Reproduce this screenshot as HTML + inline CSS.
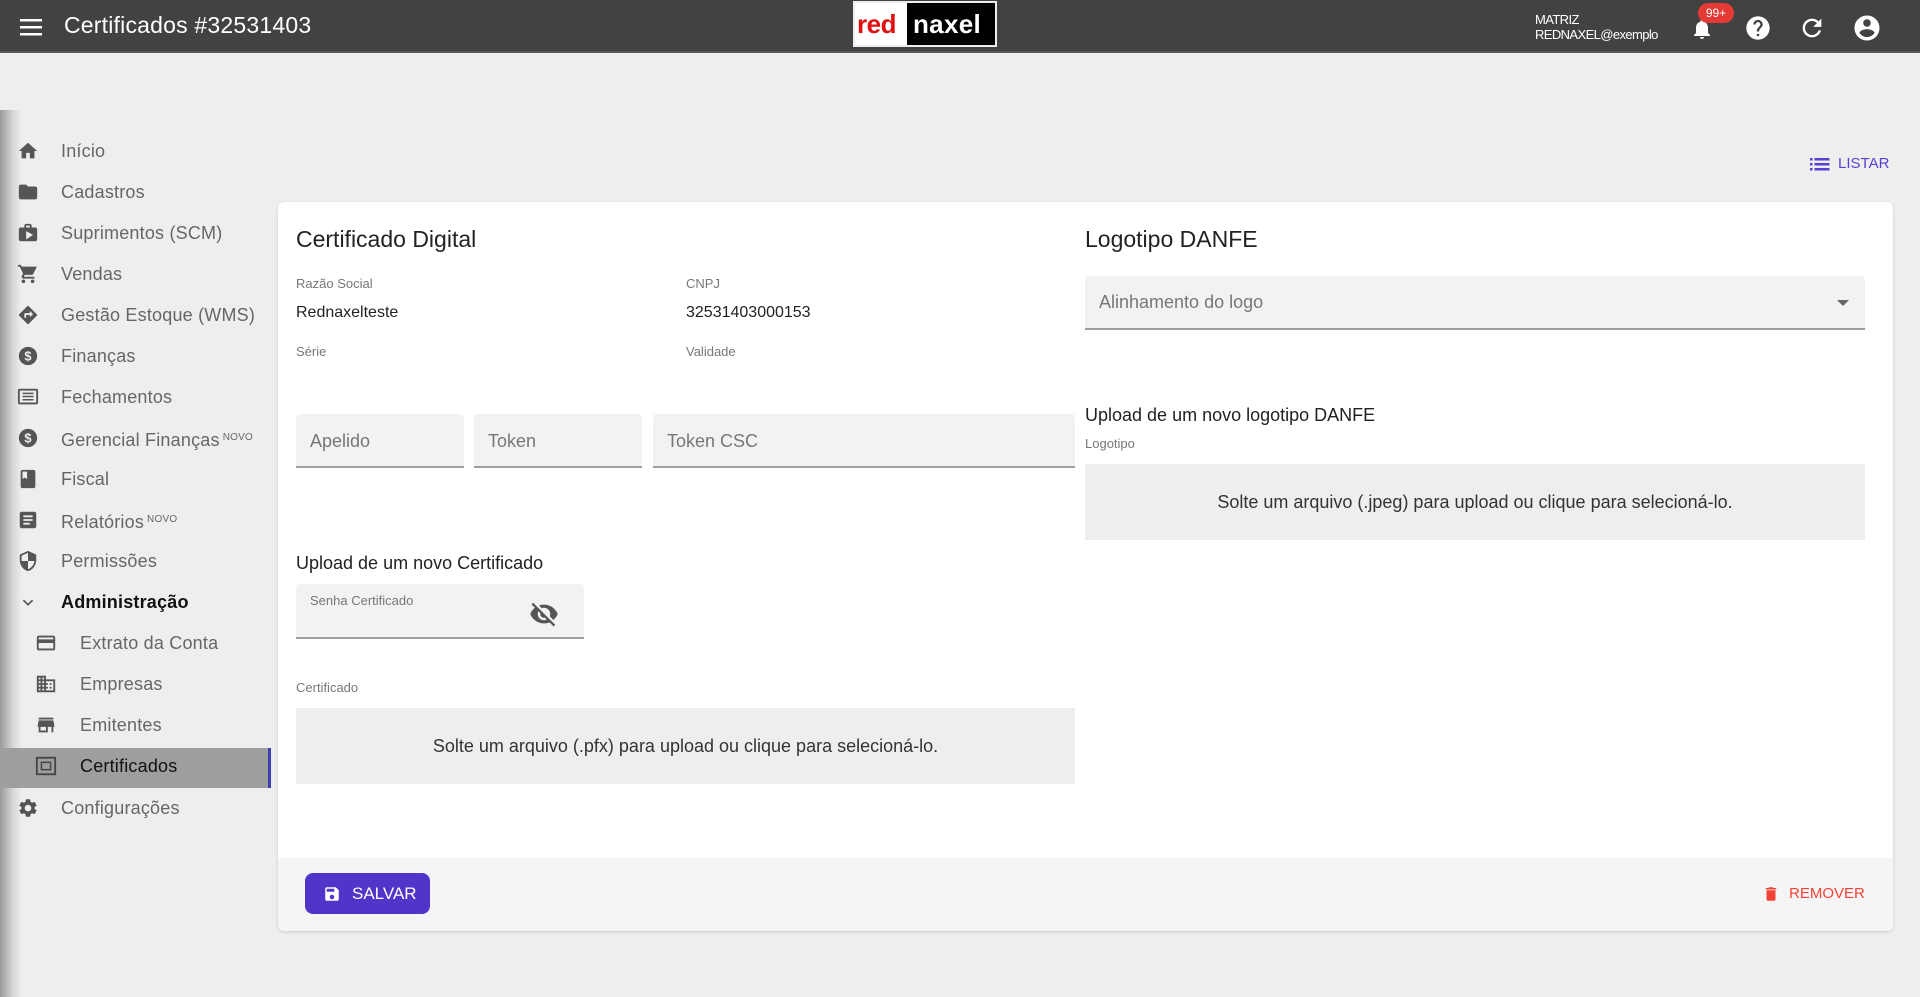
<!DOCTYPE html>
<html><head><meta charset="utf-8"><style>
*{box-sizing:border-box;margin:0;padding:0}
body{width:1920px;height:997px;background:#eeeeee;font-family:"Liberation Sans",Arial,sans-serif;position:relative;overflow:hidden;color:#212121}
.top{position:absolute;left:0;top:0;width:1920px;height:53px;background:#424242;border-bottom:2px solid #5a5a5a}
.abs{position:absolute}
.side{position:absolute;left:0;top:53px;width:272px;height:944px;background:#eeeeee}
.shadow{position:absolute;left:0;top:110px;width:22px;height:887px;background:linear-gradient(90deg,#9a9a9a,#d8d8d8 60%,rgba(238,238,238,0))}
.it{position:absolute;left:0;width:272px;height:40px;font-size:18px;color:#666;line-height:40px;letter-spacing:.2px}
.it .ic{position:absolute;left:17px;top:9px;width:22px;height:22px}
.it span{position:absolute;left:61px}
.it.sub .ic{left:35px}
.it.sub span{left:80px}
sup{font-size:10px;vertical-align:6px;margin-left:3px}
.card{position:absolute;left:278px;top:202px;width:1615px;height:729px;background:#fff;border-radius:6px;box-shadow:0 1px 3px rgba(0,0,0,.15);overflow:hidden}
.foot{position:absolute;left:0;bottom:0;width:100%;height:73px;background:#f5f5f5}
.lbl{position:absolute;font-size:13px;color:#777}
.val{position:absolute;font-size:16px;color:#222}
.h{position:absolute;font-size:23px;color:#222}
.inp{position:absolute;background:#f2f2f2;border-bottom:2px solid #9e9e9e;border-radius:4px 4px 0 0;font-size:18px;color:#777}
.drop{position:absolute;background:#eeeeee;font-size:18px;color:#333;text-align:center}
</style></head><body>
<div class="top">
  <svg class="abs" style="left:20px;top:18px" width="22" height="18" viewBox="0 0 22 18"><rect y="1" width="22" height="2.5" fill="#fff"/><rect y="8" width="22" height="2.5" fill="#fff"/><rect y="15" width="22" height="2.5" fill="#fff"/></svg>
  <div class="abs" style="left:64px;top:12px;font-size:23px;color:#fff;letter-spacing:.2px">Certificados #32531403</div>
  <div class="abs" style="left:853px;top:1px;width:144px;height:46px;background:#000;border:2px solid #eee"></div>
  <div class="abs" style="left:855px;top:3px;width:52px;height:42px;background:#fff"></div>
  <div class="abs" style="left:857px;top:9px;font-size:26px;font-weight:bold;color:#e01010;letter-spacing:-.5px">red</div>
  <div class="abs" style="left:913px;top:9px;font-size:26px;font-weight:bold;color:#fff;letter-spacing:.3px">naxel</div>
  <div class="abs" style="left:1535px;top:12px;font-size:13px;color:#fff;line-height:15px;letter-spacing:-.6px">MATRIZ<br>REDNAXEL@exemplo</div>
  <svg class="abs" style="left:1690px;top:16px" width="24" height="26" viewBox="0 0 24 24"><path d="M12 22c1.1 0 2-.9 2-2h-4c0 1.1.9 2 2 2zm6-6v-5c0-3.070-1.640-5.640-4.5-6.320V4c0-.83-.67-1.5-1.5-1.5s-1.5.67-1.5 1.5v.68C7.63 5.36 6 7.92 6 11v5l-2 2v1h16v-1l-2-2z" fill="#fff"/></svg>
  <div class="abs" style="left:1698px;top:3px;width:36px;height:20px;border-radius:10px;background:#e53935;color:#fff;font-size:12px;line-height:20px;text-align:center">99+</div>
  <svg class="abs" style="left:1744px;top:14px" width="28" height="28" viewBox="0 0 24 24"><path d="M12 2C6.48 2 2 6.48 2 12s4.48 10 10 10 10-4.48 10-10S17.52 2 12 2zm1 17h-2v-2h2v2zm2.07-7.75l-.9.92C13.45 12.9 13 13.5 13 15h-2v-.5c0-1.1.45-2.1 1.17-2.83l1.24-1.26c.37-.36.59-.86.59-1.41 0-1.1-.9-2-2-2s-2 .9-2 2H8c0-2.21 1.79-4 4-4s4 1.790 4 4c0 .88-.36 1.68-.93 2.25z" fill="#fff"/></svg>
  <svg class="abs" style="left:1798px;top:14px" width="28" height="28" viewBox="0 0 24 24"><path d="M17.65 6.35C16.2 4.9 14.21 4 12 4c-4.42 0-7.99 3.58-7.99 8s3.57 8 7.99 8c3.73 0 6.84-2.55 7.73-6h-2.080c-.82 2.33-3.040 4-5.650 4-3.310 0-6-2.690-6-6s2.690-6 6-6c1.660 0 3.140.69 4.220 1.780L13 11h7V4l-2.350 2.350z" fill="#fff"/></svg>
  <svg class="abs" style="left:1852px;top:13px" width="30" height="30" viewBox="0 0 24 24"><path d="M12 2C6.48 2 2 6.48 2 12s4.48 10 10 10 10-4.48 10-10S17.52 2 12 2zm0 3c1.66 0 3 1.34 3 3s-1.34 3-3 3-3-1.34-3-3 1.34-3 3-3zm0 14.2c-2.5 0-4.71-1.28-6-3.22.03-1.99 4-3.08 6-3.08 1.99 0 5.97 1.09 6 3.08-1.29 1.94-3.5 3.22-6 3.22z" fill="#fff"/></svg>
</div>

<div class="side"></div>
<div class="shadow"></div>
<div class="abs" style="left:0;top:748px;width:269px;height:40px;background:#9e9e9e"></div>
<div class="abs" style="left:268px;top:748px;width:3px;height:40px;background:#3f3fb0"></div>

<div class="it" style="top:131px"><svg class="ic" viewBox="0 0 24 24"><path d="M10 20v-6h4v6h5v-8h3L12 3 2 12h3v8z" fill="#555"/></svg><span>Início</span></div>
<div class="it" style="top:172px"><svg class="ic" viewBox="0 0 24 24"><path d="M10 4H4c-1.1 0-2 .9-2 2v12c0 1.1.9 2 2 2h16c1.1 0 2-.9 2-2V8c0-1.1-.9-2-2-2h-8l-2-2z" fill="#555"/></svg><span>Cadastros</span></div>
<div class="it" style="top:213px"><svg class="ic" viewBox="0 0 24 24"><path d="M20 6h-4V4c0-1.1-.9-2-2-2h-4c-1.1 0-2 .9-2 2v2H4c-1.1 0-2 .9-2 2v11c0 1.1.9 2 2 2h16c1.1 0 2-.9 2-2V8c0-1.1-.9-2-2-2zM10 4h4v2h-4V4zm0 15V10l7.5 4z" fill="#555"/></svg><span>Suprimentos (SCM)</span></div>
<div class="it" style="top:254px"><svg class="ic" viewBox="0 0 24 24"><path d="M7 18c-1.1 0-2 .9-2 2s.9 2 2 2 2-.9 2-2-.9-2-2-2zM1 2v2h2l3.6 7.59-1.35 2.45C4.52 15.37 5.48 17 7 17h12v-2H7.42l1.1-2h7.45c.75 0 1.41-.41 1.75-1.03L21.7 4H5.21l-.94-2H1zm16 16c-1.1 0-2 .9-2 2s.9 2 2 2 2-.9 2-2-.9-2-2-2z" fill="#555"/></svg><span>Vendas</span></div>
<div class="it" style="top:295px"><svg class="ic" viewBox="0 0 24 24"><path d="M21.7 11.3l-9-9a1 1 0 00-1.4 0l-9 9a1 1 0 000 1.4l9 9a1 1 0 001.4 0l9-9a1 1 0 000-1.4zM14 14.5V12h-4v3H8v-4c0-.55.45-1 1-1h5V7.5l3.5 3.5-3.5 3.5z" fill="#555"/></svg><span>Gestão Estoque (WMS)</span></div>
<div class="it" style="top:336px"><svg class="ic" viewBox="0 0 24 24"><circle cx="12" cy="12" r="10" fill="#555"/><text x="12" y="17" font-size="14" font-weight="bold" text-anchor="middle" fill="#eee" font-family="Liberation Sans">$</text></svg><span>Finanças</span></div>
<div class="it" style="top:377px"><svg class="ic" viewBox="0 0 24 24"><rect x="2" y="4" width="20" height="15" rx="1" fill="none" stroke="#555" stroke-width="2"/><path d="M6 8h12M6 11.5h12M6 15h12" stroke="#555" stroke-width="1.6"/></svg><span>Fechamentos</span></div>
<div class="it" style="top:418px"><svg class="ic" viewBox="0 0 24 24"><circle cx="12" cy="12" r="10" fill="#555"/><text x="12" y="17" font-size="14" font-weight="bold" text-anchor="middle" fill="#eee" font-family="Liberation Sans">$</text></svg><span>Gerencial Finanças<sup>NOVO</sup></span></div>
<div class="it" style="top:459px"><svg class="ic" viewBox="0 0 24 24"><path d="M18 2H6c-1.1 0-2 .9-2 2v16c0 1.1.9 2 2 2h12c1.1 0 2-.9 2-2V4c0-1.1-.9-2-2-2zM6 4h5v8l-2.5-1.5L6 12V4z" fill="#555"/></svg><span>Fiscal</span></div>
<div class="it" style="top:500px"><svg class="ic" viewBox="0 0 24 24"><path d="M19 3H5c-1.1 0-2 .9-2 2v14c0 1.1.9 2 2 2h14c1.1 0 2-.9 2-2V5c0-1.1-.9-2-2-2zm-5 14H7v-2h7v2zm3-4H7v-2h10v2zm0-4H7V7h10v2z" fill="#555"/></svg><span>Relatórios<sup>NOVO</sup></span></div>
<div class="it" style="top:541px"><svg class="ic" viewBox="0 0 24 24"><path d="M12 1L3 5v6c0 5.55 3.84 10.74 9 12 5.16-1.26 9-6.45 9-12V5l-9-4zm0 10.99h7c-.53 4.12-3.28 7.79-7 8.94V12H5V6.3l7-3.11v8.8z" fill="#555"/></svg><span>Permissões</span></div>
<div class="it" style="top:582px;color:#111;font-weight:bold"><svg class="ic" viewBox="0 0 24 24"><path d="M7 10l5 5 5-5" fill="none" stroke="#555" stroke-width="1.8"/></svg><span>Administração</span></div>
<div class="it sub" style="top:623px"><svg class="ic" viewBox="0 0 24 24"><path d="M20 4H4c-1.11 0-2 .89-2 2v12c0 1.11.89 2 2 2h16c1.11 0 2-.89 2-2V6c0-1.11-.89-2-2-2zm0 14H4v-6h16v6zm0-10H4V6h16v2z" fill="#555"/></svg><span>Extrato da Conta</span></div>
<div class="it sub" style="top:664px"><svg class="ic" viewBox="0 0 24 24"><path d="M12 7V3H2v18h20V7H12zM6 19H4v-2h2v2zm0-4H4v-2h2v2zm0-4H4V9h2v2zm0-4H4V5h2v2zm4 12H8v-2h2v2zm0-4H8v-2h2v2zm0-4H8V9h2v2zm0-4H8V5h2v2zm10 12h-8v-2h2v-2h-2v-2h2v-2h-2V9h8v10zm-2-8h-2v2h2v-2zm0 4h-2v2h2v-2z" fill="#555"/></svg><span>Empresas</span></div>
<div class="it sub" style="top:705px"><svg class="ic" viewBox="0 0 24 24"><path d="M20 4H4v2h16V4zm1 10v-2l-1-5H4l-1 5v2h1v6h10v-6h4v6h2v-6h1zm-9 4H6v-4h6v4z" fill="#555"/></svg><span>Emitentes</span></div>
<div class="it sub" style="top:746px;color:#111"><svg class="ic" viewBox="0 0 24 24"><rect x="2" y="3" width="20" height="18" fill="none" stroke="#444" stroke-width="2"/><rect x="7" y="8" width="10" height="8" fill="none" stroke="#444" stroke-width="1.6"/></svg><span>Certificados</span></div>
<div class="it" style="top:788px"><svg class="ic" viewBox="0 0 24 24"><path d="M19.14 12.94c.04-.3.06-.61.06-.94 0-.32-.02-.64-.07-.94l2.030-1.580a.49.49 0 00.12-.61l-1.920-3.320a.488.488 0 00-.59-.22l-2.390.96c-.5-.38-1.030-.7-1.620-.94l-.36-2.540a.484.484 0 00-.48-.41h-3.840c-.24 0-.43.17-.47.41l-.36 2.540c-.59.24-1.130.57-1.620.94l-2.390-.96c-.22-.08-.47 0-.59.22L2.74 8.87c-.12.21-.08.47.12.61l2.030 1.580c-.05.3-.09.63-.09.94s.02.64.07.94l-2.030 1.580a.49.49 0 00-.12.61l1.920 3.320c.12.22.37.29.59.22l2.390-.96c.5.38 1.030.7 1.620.94l.36 2.540c.05.24.24.41.48.41h3.840c.24 0 .44-.17.47-.41l.36-2.540c.59-.24 1.130-.56 1.620-.94l2.390.96c.22.08.47 0 .59-.22l1.920-3.320c.12-.22.07-.47-.12-.61l-2.010-1.580zM12 15.6c-1.98 0-3.6-1.62-3.6-3.6s1.62-3.6 3.6-3.6 3.6 1.62 3.6 3.6-1.62 3.6-3.6 3.6z" fill="#555"/></svg><span>Configurações</span></div>

<svg class="abs" style="left:1810px;top:155px" width="20" height="18" viewBox="0 0 20 18"><g fill="#5b3fd3"><rect x="0" y="3" width="2.5" height="2.5"/><rect x="0" y="8" width="2.5" height="2.5"/><rect x="0" y="13" width="2.5" height="2.5"/><rect x="4.5" y="3" width="15" height="2.5"/><rect x="4.5" y="8" width="15" height="2.5"/><rect x="4.5" y="13" width="15" height="2.5"/></g></svg>
<div class="abs" style="left:1838px;top:155px;font-size:15px;color:#5b3fd3">LISTAR</div>

<div class="card">
  <div class="h" style="left:18px;top:24px">Certificado Digital</div>
  <div class="lbl" style="left:18px;top:74px">Razão Social</div>
  <div class="val" style="left:18px;top:102px">Rednaxelteste</div>
  <div class="lbl" style="left:408px;top:74px">CNPJ</div>
  <div class="val" style="left:408px;top:102px">32531403000153</div>
  <div class="lbl" style="left:18px;top:142px">Série</div>
  <div class="lbl" style="left:408px;top:142px">Validade</div>
  <div class="inp" style="left:18px;top:212px;width:168px;height:54px;padding:17px 14px">Apelido</div>
  <div class="inp" style="left:196px;top:212px;width:168px;height:54px;padding:17px 14px">Token</div>
  <div class="inp" style="left:375px;top:212px;width:422px;height:54px;padding:17px 14px">Token CSC</div>
  <div class="abs" style="left:18px;top:351px;font-size:18px;color:#222">Upload de um novo Certificado</div>
  <div class="inp" style="left:18px;top:382px;width:288px;height:55px;padding:9px 14px;font-size:13px">Senha Certificado
    <svg class="abs" style="left:233px;top:15px" width="30" height="30" viewBox="0 0 24 24"><path d="M12 7c2.76 0 5 2.24 5 5 0 .65-.13 1.26-.36 1.83l2.92 2.92c1.51-1.26 2.7-2.89 3.43-4.75-1.73-4.39-6-7.5-11-7.5-1.4 0-2.74.25-3.98.7l2.16 2.16C10.74 7.13 11.35 7 12 7zM2 4.27l2.28 2.28.46.46C3.08 8.3 1.78 10.02 1 12c1.73 4.39 6 7.5 11 7.5 1.55 0 3.03-.3 4.38-.84l.42.42L19.73 22 21 20.73 3.27 3 2 4.27zM7.53 9.8l1.55 1.55c-.05.21-.08.43-.08.65 0 1.66 1.34 3 3 3 .22 0 .44-.03.65-.08l1.55 1.55c-.67.33-1.41.53-2.2.53-2.76 0-5-2.24-5-5 0-.79.2-1.53.53-2.2z" fill="#555"/></svg>
  </div>
  <div class="lbl" style="left:18px;top:478px">Certificado</div>
  <div class="drop" style="left:18px;top:506px;width:779px;height:76px;line-height:76px">Solte um arquivo (.pfx) para upload ou clique para selecioná-lo.</div>

  <div class="h" style="left:807px;top:24px">Logotipo DANFE</div>
  <div class="inp" style="left:807px;top:74px;width:780px;height:54px;padding:16px 14px">Alinhamento do logo
    <div class="abs" style="right:16px;top:24px;width:0;height:0;border-left:6px solid transparent;border-right:6px solid transparent;border-top:6px solid #666"></div>
  </div>
  <div class="abs" style="left:807px;top:203px;font-size:18px;color:#222">Upload de um novo logotipo DANFE</div>
  <div class="lbl" style="left:807px;top:234px">Logotipo</div>
  <div class="drop" style="left:807px;top:262px;width:780px;height:76px;line-height:76px">Solte um arquivo (.jpeg) para upload ou clique para selecioná-lo.</div>

  <div class="foot">
    <div class="abs" style="left:27px;top:15px;width:125px;height:41px;background:#5035c8;border-radius:8px;color:#fff;font-size:17px;line-height:41px">
      <svg class="abs" style="left:18px;top:12px" width="18" height="18" viewBox="0 0 24 24"><path d="M17 3H5c-1.11 0-2 .9-2 2v14c0 1.1.89 2 2 2h14c1.1 0 2-.9 2-2V7l-4-4zm-5 16c-1.66 0-3-1.34-3-3s1.34-3 3-3 3 1.34 3 3-1.34 3-3 3zm3-10H5V5h10v4z" fill="#fff"/></svg>
      <span style="position:absolute;left:47px">SALVAR</span></div>
    <svg class="abs" style="left:1484px;top:26px" width="18" height="20" viewBox="0 0 24 24"><path d="M6 19c0 1.1.9 2 2 2h8c1.1 0 2-.9 2-2V7H6v12zM19 4h-3.5l-1-1h-5l-1 1H5v2h14V4z" fill="#f44336"/></svg>
    <div class="abs" style="left:1511px;top:27px;font-size:15px;color:#f44336">REMOVER</div>
  </div>
</div>
</body></html>
